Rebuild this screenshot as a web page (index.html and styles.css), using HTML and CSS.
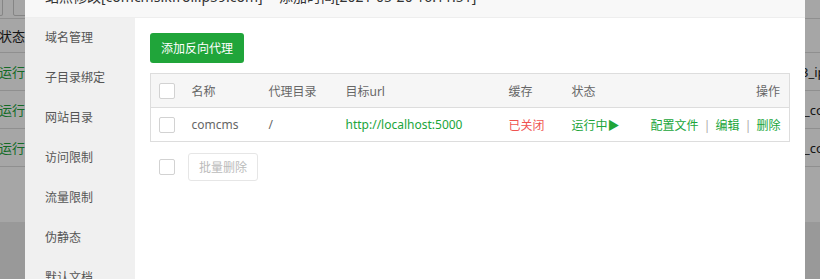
FILE: index.html
```html
<!DOCTYPE html>
<html lang="zh-CN">
<head>
<meta charset="utf-8">
<title>站点修改</title>
<link rel="stylesheet" href="styles.css">
</head>
<body>
<div class="page">
  <div class="bg-table">
    <div class="bg-top"><span class="bg-btn bg-btn-a"></span><span class="bg-btn bg-btn-b"></span></div>
    <div class="bg-row bg-head"><span class="bg-l">状态</span><span class="bg-r"></span></div>
    <div class="bg-row"><span class="bg-l green">运行中</span><span class="bg-r">3_ip</span></div>
    <div class="bg-row"><span class="bg-l green">运行中</span><span class="bg-r bg-r-co">_co</span></div>
    <div class="bg-row"><span class="bg-l green">运行中</span><span class="bg-r bg-r-co">_co</span></div>
  </div>
</div>
<div class="shade"></div>
<div class="modal">
  <div class="modal-title">站点修改[comcms.kfroli.p59.com] -- 添加时间[2021-05-20 16:11:51]</div>
  <div class="modal-body">
    <ul class="side-menu">
      <li>域名管理</li>
      <li>子目录绑定</li>
      <li>网站目录</li>
      <li>访问限制</li>
      <li>流量限制</li>
      <li>伪静态</li>
      <li>默认文档</li>
    </ul>
    <div class="content">
      <button class="btn-green">添加反向代理</button>
      <table class="proxy-table">
        <colgroup>
          <col class="c-cb"><col class="c-name"><col class="c-dir"><col class="c-url"><col class="c-cache"><col class="c-status"><col>
        </colgroup>
        <thead>
          <tr>
            <th><span class="cb"></span></th>
            <th>名称</th>
            <th>代理目录</th>
            <th>目标url</th>
            <th>缓存</th>
            <th>状态</th>
            <th class="right">操作</th>
          </tr>
        </thead>
        <tbody>
          <tr>
            <td><span class="cb"></span></td>
            <td>comcms</td>
            <td>/</td>
            <td class="green">http://localhost:5000</td>
            <td class="red">已关闭</td>
            <td class="green">运行中▶</td>
            <td class="right"><a class="link">配置文件</a><span class="sep">|</span><a class="link">编辑</a><span class="sep">|</span><a class="link">删除</a></td>
          </tr>
        </tbody>
      </table>
      <div class="batch">
        <span class="cb"></span>
        <button class="btn-disabled">批量删除</button>
      </div>
    </div>
  </div>
</div>
</body>
</html>
```

FILE: styles.css
```css
html, body {
  margin: 0;
  padding: 0;
}
body {
  width: 820px;
  height: 279px;
  overflow: hidden;
  position: relative;
  font-family: "Noto Sans", "Noto Sans CJK SC", sans-serif;
  font-size: 12px;
  color: #333;
}
.page {
  height: 279px;
  background: #ececec;
}
.bg-table {
  height: 222px;
  background: #fff;
}
.bg-top {
  height: 19px;
  border-bottom: 1px solid #dcdcdc;
  box-sizing: border-box;
  display: flex;
  align-items: flex-end;
  gap: 10px;
  padding-bottom: 2px;
}
.bg-btn {
  display: inline-block;
  height: 24px;
  border: 1px solid #ccc;
  border-radius: 2px;
  box-sizing: border-box;
}
.bg-btn-a { width: 4px; margin-left: -1px; border-left: 0; }
.bg-btn-b { width: 30px; }
.bg-row {
  height: 38px;
  border-bottom: 1px solid #dcdcdc;
  box-sizing: border-box;
  display: grid;
  grid-template-columns: 801px 1fr;
  align-items: center;
  font-size: 13px;
  color: #222;
}
.bg-head { height: 34px; }
.bg-l { margin-left: -1px; }
.bg-r { white-space: nowrap; }
.bg-r-co { padding-left: 3px; }
.bg-l.green { color: #20a53a; }
.shade {
  position: absolute;
  inset: 0;
  background: rgba(0, 0, 0, 0.35);
}
.modal {
  position: absolute;
  left: 25px;
  top: -24px;
  width: 780px;
  height: 303px;
  overflow: hidden;
  background: #fff;
  display: flex;
  flex-direction: column;
}
.modal-title {
  height: 41px;
  line-height: 41px;
  border-bottom: 1px solid #eee;
  background: #f8f8f8;
  padding-left: 20px;
  font-size: 14px;
  color: #333;
  white-space: nowrap;
}
.modal-body {
  flex: 1;
  display: flex;
  min-height: 0;
}
.side-menu {
  list-style: none;
  margin: 0;
  padding: 0;
  width: 110px;
  background: #f0f0f0;
}
.side-menu li {
  height: 40px;
  line-height: 40px;
  padding-left: 20px;
  color: #555;
  font-size: 12px;
}
.content {
  flex: 1;
  padding: 15px;
}
.btn-green {
  display: block;
  height: 30px;
  padding: 0 11px;
  border: 0;
  border-radius: 3px;
  background: #20a53a;
  color: #fff;
  font-family: inherit;
  font-size: 12px;
}
.proxy-table {
  margin-top: 10px;
  width: 640px;
  border-collapse: collapse;
  table-layout: fixed;
  border: 1px solid #ddd;
}
.c-cb { width: 41px; }
.c-name { width: 77px; }
.c-dir { width: 77px; }
.c-url { width: 163px; }
.c-cache { width: 63px; }
.c-status { width: 79px; }
.proxy-table th,
.proxy-table td {
  height: 33px;
  padding: 0;
  text-align: left;
  font-weight: normal;
  white-space: nowrap;
  color: #666;
  border-bottom: 1px solid #ddd;
}
.proxy-table th {
  background: #f6f6f6;
}
.proxy-table th:first-child,
.proxy-table td:first-child {
  padding-left: 8px;
}
.proxy-table .right {
  text-align: right;
  padding-right: 9px;
}
.proxy-table td.green { color: #20a53a; }
.proxy-table td.red { color: #ef5350; }
.cb {
  display: inline-block;
  width: 16px;
  height: 16px;
  border: 1px solid #d2d2d2;
  border-radius: 2px;
  box-sizing: border-box;
  background: #fff;
  vertical-align: middle;
}
.link {
  color: #20a53a;
}
.sep {
  display: inline-block;
  width: 17px;
  text-align: center;
  color: #aaa;
}
.batch {
  margin-top: 11px;
  padding-left: 9px;
  display: flex;
  align-items: center;
  gap: 13px;
}
.btn-disabled {
  height: 28px;
  padding: 0 10px;
  border: 1px solid #e6e6e6;
  border-radius: 3px;
  background: #fff;
  color: #bbb;
  font-family: inherit;
  font-size: 12px;
}
```
